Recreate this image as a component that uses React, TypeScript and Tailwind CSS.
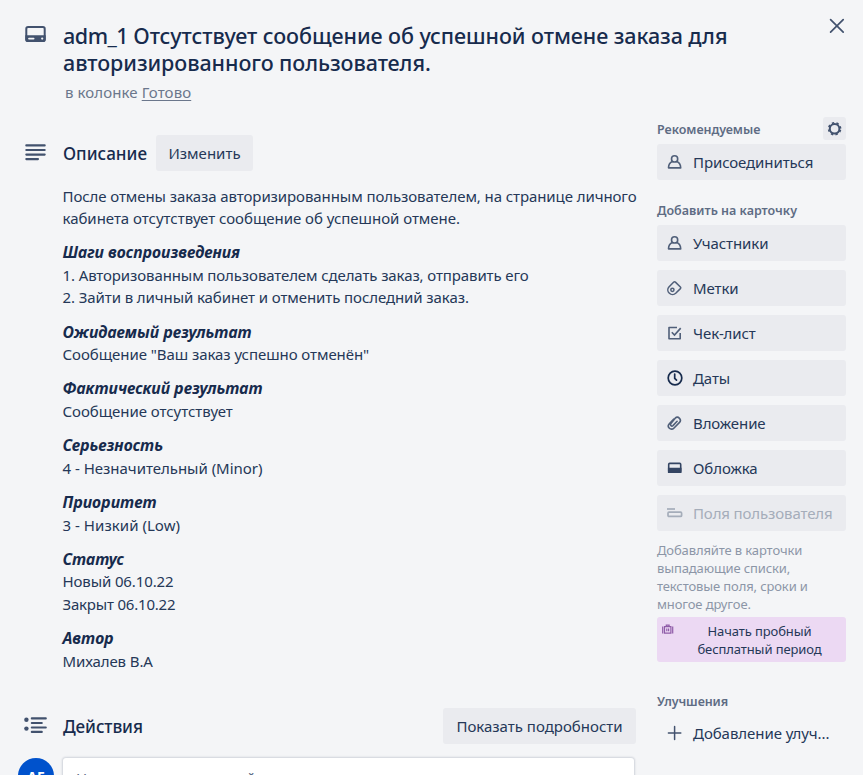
import React from "react";

const ink = "text-[#172b4d]";
const btn = "flex h-9 items-center rounded-[3px] bg-[#eaebef] text-[#253858]";

type IconProps = { className?: string };

const Person = ({ className = "" }: IconProps) => (
  <svg className={className} width="16" height="16" viewBox="0 0 16 16" fill="none" stroke="currentColor" strokeWidth="1.6">
    <circle cx="7.6" cy="4.9" r="3.1" />
    <path d="M5.5 7.6C3 8.5 1.6 10.8 1.5 13.9h12.2c-.1-3.1-1.5-5.4-4-6.3" strokeLinejoin="round" />
  </svg>
);
const Tag = () => (
  <svg width="16" height="16" viewBox="0 0 16 16" fill="none" stroke="currentColor" strokeWidth="1.5">
    <path d="M6.8 2.1Q7.6 1.3 8.4 2.1L13.4 7Q14.1 7.8 13.4 8.6L8.7 13.3C7 14.9 4.1 14.9 2.4 13.3C.5 11.5.3 8.8 1.9 7.1Z" strokeLinejoin="round" />
    <circle cx="5.4" cy="9.8" r="1.6" />
  </svg>
);
const Check = () => (
  <svg width="16" height="16" viewBox="0 0 16 16" fill="none" stroke="currentColor" strokeWidth="1.6">
    <path d="M10 2.5H2v11.2h11.2V8" strokeLinejoin="round" />
    <path d="M4.8 7.2l2.7 2.9 6.2-7" />
  </svg>
);
const Clock = () => (
  <svg width="16" height="16" viewBox="0 0 16 16" fill="none" stroke="currentColor" strokeWidth="1.7">
    <circle cx="8" cy="8" r="6.8" />
    <path d="M7.7 4v4.4l1.8 1.8" strokeLinecap="round" />
  </svg>
);
const Clip = () => (
  <svg width="16" height="16" viewBox="0 0 16 16" fill="none" stroke="currentColor" strokeWidth="1.6" strokeLinecap="round">
    <path d="M6.8 4.1L2.3 8.8a3.1 3.1 0 0 0 4.5 4.4l5.5-5.6A3 3 0 0 0 8.2 3.2L3.9 8.5c-1.2 1.6.7 3.3 2.1 2.1l4.1-4.3" />
  </svg>
);
const Cover = () => (
  <svg width="16" height="16" viewBox="0 0 16 16" fill="none" stroke="currentColor" strokeWidth="1.6">
    <rect x="1.7" y="3.4" width="12" height="8.8" rx="1" />
    <path d="M1.7 8.6h12v3.6h-12z" fill="currentColor" />
  </svg>
);
const Fields = () => (
  <svg width="16" height="16" viewBox="0 0 16 16" fill="none" stroke="currentColor" strokeWidth="1.7">
    <path d="M0 4h8" />
    <rect x="1" y="7.2" width="13.6" height="4.2" rx="1" />
  </svg>
);
const Gear = () => (
  <svg width="16" height="16" viewBox="0 0 16 16" fill="none" stroke="currentColor">
    <circle cx="7.6" cy="7.8" r="4.8" strokeWidth="2" />
    <circle cx="7.6" cy="7.8" r="6" strokeWidth="1.6" strokeDasharray="2.3 2.412" strokeDashoffset="3.506" />
  </svg>
);
const Briefcase = () => (
  <svg width="12" height="12" viewBox="0 0 12 12" fill="none" stroke="currentColor" strokeWidth="1.2">
    <path d="M.7 2.6v6.8M10.7 2.6v6.8M2.5 2.6h6.4v6.6H2.5zM4.3 2.6V1.1h2.8v1.5M4.8 4.6v2.6M6.6 4.6v2.6" />
  </svg>
);
const CardIcon = () => (
  <svg width="22" height="18" viewBox="0 0 22 18" fill="none" stroke="currentColor">
    <rect x="1.3" y="2" width="18.4" height="14" rx="1.8" strokeWidth="2" />
    <path d="M.3 10.2h20.4v4.6a2.2 2.2 0 0 1-2.2 2.2h-16a2.2 2.2 0 0 1-2.2-2.2z" fill="currentColor" stroke="none" />
    <path d="M4 13.6h4.6" stroke="#f4f5f7" strokeWidth="1.8" strokeLinecap="round" />
    <circle cx="17.2" cy="13.6" r="1.1" fill="#f4f5f7" stroke="none" />
  </svg>
);
const Lines = () => (
  <svg width="22" height="18" viewBox="0 0 22 18" stroke="currentColor" strokeWidth="2.1" strokeLinecap="round">
    <path d="M1.3 1.4h18.4M1.3 6h18.4M1.3 10.6h18.4M1.3 15.1h11.7" />
  </svg>
);
const Activity = () => (
  <svg width="24" height="18" viewBox="0 0 24 18" stroke="currentColor" strokeWidth="2.1" strokeLinecap="round">
    <path d="M7.8 1.4h14M7.8 6h10M7.8 10.5h14M7.8 14.9h10" />
    <circle cx="2.4" cy="2.8" r="2.2" fill="currentColor" stroke="none" />
    <circle cx="2.4" cy="11.6" r="2.2" fill="currentColor" stroke="none" />
  </svg>
);

type Line = { text: string; cls: string };
const heading = "text-[15.8px] font-bold italic text-[#172b4d]";
const paragraphs: Line[][] = [
  [
    { text: "После отмены заказа авторизированным пользователем, на странице личного", cls: "tracking-[-0.085px]" },
    { text: "кабинета отсутствует сообщение об успешной отмене.", cls: "tracking-[-0.03px]" },
  ],
  [
    { text: "Шаги воспроизведения", cls: heading },
    { text: "1. Авторизованным пользователем сделать заказ, отправить его", cls: "tracking-[-0.11px]" },
    { text: "2. Зайти в личный кабинет и отменить последний заказ.", cls: "tracking-[-0.09px]" },
  ],
  [
    { text: "Ожидаемый результат", cls: heading },
    { text: 'Сообщение "Ваш заказ успешно отменён"', cls: "tracking-[-0.06px]" },
  ],
  [
    { text: "Фактический результат", cls: heading },
    { text: "Сообщение отсутствует", cls: "tracking-[-0.05px]" },
  ],
  [
    { text: "Серьезность", cls: heading },
    { text: "4 - Незначительный (Minor)", cls: "tracking-[-0.02px]" },
  ],
  [
    { text: "Приоритет", cls: heading },
    { text: "3 - Низкий (Low)", cls: "tracking-[0.04px]" },
  ],
  [
    { text: "Статус", cls: heading },
    { text: "Новый 06.10.22", cls: "tracking-[-0.12px]" },
    { text: "Закрыт 06.10.22", cls: "tracking-[-0.2px]" },
  ],
  [
    { text: "Автор", cls: heading },
    { text: "Михалев В.А", cls: "tracking-[-0.1px]" },
  ],
];

const SideButton = ({ icon, label, cls = "", iconCls = "text-[#505f79]" }: { icon: React.ReactNode; label: string; cls?: string; iconCls?: string }) => (
  <button className={`${btn} w-full shrink-0 whitespace-nowrap pl-2.5 text-[15px] tracking-[-0.1px] ${cls}`}>
    <span className={`mr-2.5 flex w-4 shrink-0 ${iconCls}`}>{icon}</span>
    <span>{label}</span>
  </button>
);

export default function App() {
  return (
    <div className={`flex h-[775px] w-[863px] flex-col overflow-hidden bg-[#f4f5f7] font-['Noto_Sans','Open_Sans',sans-serif] text-[15px] ${ink}`}>
      <header className="flex h-[118px] shrink-0 pl-[25px] pt-[22px]">
        <span className="mt-[3px] w-[38px] shrink-0 text-[#42526e]"><CardIcon /></span>
        <div className="w-[766px] whitespace-nowrap">
          <h1 className="text-[21.5px] font-medium leading-[27px] tracking-[-0.06px]">
            <span className="tracking-[-0.5px]">adm_1 </span>Отсутствует сообщение об успешной отмене заказа для
            <br />
            авторизированного пользователя.
          </h1>
          <p className="ml-[2px] mt-[5px] text-[15px] leading-[22px] tracking-[0.1px] text-[#6b778c]">
            в колонке <span className="underline underline-offset-2">Готово</span>
          </p>
        </div>
        <svg className="-mt-[4px] text-[#42526e]" width="16" height="16" viewBox="0 0 16 16" stroke="currentColor" strokeWidth="1.7" strokeLinecap="round">
          <path d="M1.6 1.6l12.6 12.6M14.2 1.6L1.6 14.2" />
        </svg>
      </header>
      <div className="flex min-h-0 flex-1">
        <main className="flex w-[636px] shrink-0 flex-col whitespace-nowrap pl-[25px] pt-[17px]">
          <div className="flex h-9 shrink-0 items-center">
            <span className="w-[38px] text-[#42526e]"><Lines /></span>
            <h2 className="w-[93px] pt-[2px] text-[17.1px] font-medium">Описание</h2>
            <button className={`${btn} w-[97px] justify-center text-[15px]`}>Изменить</button>
          </div>
          <div className="ml-[37.5px] mt-[13.5px] flex h-[503px] shrink-0 flex-col gap-[11.6px] leading-[22.6px] text-[#253858]">
            {paragraphs.map((p, i) => (
              <div key={i}>
                {p.map((l) => (
                  <div key={l.text} className="h-[22.6px]"><span className={l.cls}>{l.text}</span></div>
                ))}
              </div>
            ))}
          </div>
          <div className="mt-[20.5px] flex h-9 shrink-0 items-center">
            <span className="-ml-[1px] w-[39px] text-[#42526e]"><Activity /></span>
            <h2 className="flex-1 pt-[2px] text-[17.1px] font-medium tracking-[-0.1px]">Действия</h2>
            <button className={`${btn} w-[193px] justify-center text-[15px]`}>Показать подробности</button>
          </div>
          <div className="-ml-[7px] mt-[14px] flex shrink-0">
            <span className="flex h-9 w-9 items-center justify-center rounded-full bg-[#0052cc] pt-px text-[14px] font-bold text-white">AF</span>
            <div className="ml-[9px] h-10 w-[571px] rounded-[3px] bg-white pl-[13px] pt-[10px] leading-5 text-[#5e6c84] shadow-[0_0_2px_1px_#091e4226]">
              Напишите комментарий…
            </div>
          </div>
        </main>
        <aside className="ml-[21px] flex w-[189px] shrink-0 flex-col whitespace-nowrap">
          <div className="flex h-[26px] shrink-0 items-start justify-between">
            <h3 className="pt-px text-[12.5px] font-semibold leading-[22px] tracking-[-0.03px] text-[#5e6c84]">Рекомендуемые</h3>
            <span className="-mt-[1px] flex h-[23px] w-[23px] items-center justify-center rounded-[3px] bg-[#eaebef] text-[#42526e]"><Gear /></span>
          </div>
          <SideButton icon={<Person />} label="Присоединиться" />
          <h3 className="mb-[4px] mt-[21px] text-[12.5px] font-semibold leading-5 text-[#5e6c84]">Добавить на карточку</h3>
          <div className="flex flex-col gap-[9px]">
            <SideButton icon={<Person />} label="Участники" />
            <SideButton icon={<Tag />} label="Метки" />
            <SideButton icon={<Check />} label="Чек-лист" />
            <SideButton icon={<Clock />} label="Даты" iconCls="text-[#172b4d]" />
            <SideButton icon={<Clip />} label="Вложение" />
            <SideButton icon={<Cover />} label="Обложка" iconCls="text-[#344563]" />
            <button className="flex h-9 w-full shrink-0 items-center rounded-[3px] bg-[#eaebef] pl-2.5 tracking-[-0.13px] text-[#a5adba]">
              <span className="mr-2.5 flex w-4 shrink-0"><Fields /></span>
              <span>Поля пользователя</span>
            </button>
          </div>
          <p className="mt-[10px] text-[13px] leading-[18px] tracking-[-0.12px] text-[#8c96a7]">
            Добавляйте в карточки<br />выпадающие списки,<br />текстовые поля, сроки и<br />многое другое.
          </p>
          <button className="mt-[4px] flex h-[45px] shrink-0 rounded-[3px] bg-[#ecd9f3] pt-[5px] text-[13px] leading-[18px] tracking-[-0.1px] text-[#253858]">
            <span className="ml-[5px] mt-[2px] text-[#8f5ca8]"><Briefcase /></span>
            <span className="ml-[12px] w-[147px] text-center">Начать пробный<br />бесплатный период</span>
          </button>
          <h3 className="mt-[30px] text-[12.5px] font-semibold leading-5 tracking-[-0.1px] text-[#5e6c84]">Улучшения</h3>
          <button className="mt-[3px] flex h-9 items-center pl-[10px] tracking-[-0.06px] text-[#253858]">
            <svg className="mr-2.5 text-[#42526e]" width="16" height="16" viewBox="0 0 16 16" stroke="currentColor" strokeWidth="1.5" strokeLinecap="round"><path d="M1.4 8h12.4M7.6 1.6v12.8" /></svg>
            <span>Добавление улуч...</span>
          </button>
        </aside>
      </div>
    </div>
  );
}
